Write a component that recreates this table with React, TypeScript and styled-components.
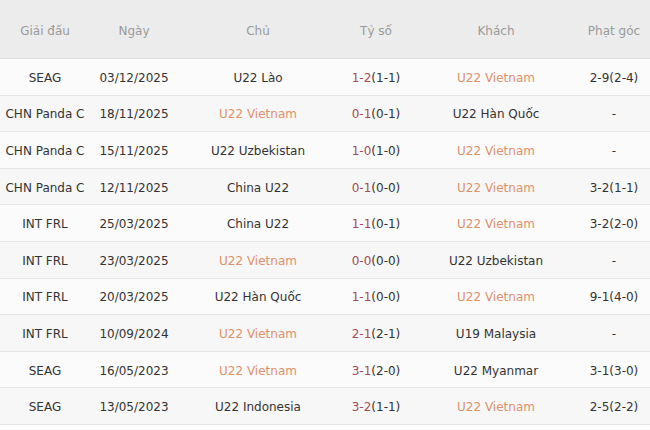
import React from "react";
import styled, { createGlobalStyle } from "styled-components";

const GlobalStyle = createGlobalStyle`
  body {
    margin: 0;
    background: #fff;
    font-family: "DejaVu Sans", Verdana, sans-serif;
  }
`;

const COLS = "90px 88px 160px 76px 164px 72px";

const Table = styled.div`
  width: 650px;
  display: flex;
  flex-direction: column;
`;

const HeaderRow = styled.div`
  display: grid;
  grid-template-columns: ${COLS};
  height: 59px;
  align-items: center;
  background: #ececec;
  border-bottom: 1px solid #dedede;
  box-sizing: border-box;
`;

const HeaderCell = styled.div`
  text-align: center;
  font-size: 12px;
  color: #9a9a9a;
  padding-top: 3px;
`;

const Row = styled.div<{ $alt: boolean }>`
  display: grid;
  grid-template-columns: ${COLS};
  height: 36.6px;
  align-items: center;
  background: ${(p) => (p.$alt ? "#f7f7f7" : "#fbfbfb")};
  border-bottom: 1px solid #e4e4e4;
  box-sizing: border-box;
`;

const Cell = styled.div<{ $home?: boolean }>`
  text-align: center;
  font-size: 12px;
  color: ${(p) => (p.$home ? "#e0906a" : "#333")};
  white-space: nowrap;
  padding-top: 2px;
`;

const FullTime = styled.span`
  color: #a8495a;
`;

type Match = {
  league: string;
  date: string;
  home: string;
  ft: string;
  ht: string;
  away: string;
  corners: string;
};

const TEAM = "U22 Vietnam";

const matches: Match[] = [
  { league: "SEAG", date: "03/12/2025", home: "U22 Lào", ft: "1-2", ht: "(1-1)", away: TEAM, corners: "2-9(2-4)" },
  { league: "CHN Panda C", date: "18/11/2025", home: TEAM, ft: "0-1", ht: "(0-1)", away: "U22 Hàn Quốc", corners: "-" },
  { league: "CHN Panda C", date: "15/11/2025", home: "U22 Uzbekistan", ft: "1-0", ht: "(1-0)", away: TEAM, corners: "-" },
  { league: "CHN Panda C", date: "12/11/2025", home: "China U22", ft: "0-1", ht: "(0-0)", away: TEAM, corners: "3-2(1-1)" },
  { league: "INT FRL", date: "25/03/2025", home: "China U22", ft: "1-1", ht: "(0-1)", away: TEAM, corners: "3-2(2-0)" },
  { league: "INT FRL", date: "23/03/2025", home: TEAM, ft: "0-0", ht: "(0-0)", away: "U22 Uzbekistan", corners: "-" },
  { league: "INT FRL", date: "20/03/2025", home: "U22 Hàn Quốc", ft: "1-1", ht: "(0-0)", away: TEAM, corners: "9-1(4-0)" },
  { league: "INT FRL", date: "10/09/2024", home: TEAM, ft: "2-1", ht: "(2-1)", away: "U19 Malaysia", corners: "-" },
  { league: "SEAG", date: "16/05/2023", home: TEAM, ft: "3-1", ht: "(2-0)", away: "U22 Myanmar", corners: "3-1(3-0)" },
  { league: "SEAG", date: "13/05/2023", home: "U22 Indonesia", ft: "3-2", ht: "(1-1)", away: TEAM, corners: "2-5(2-2)" },
];

const headers = ["Giải đấu", "Ngày", "Chủ", "Tỷ số", "Khách", "Phạt góc"];

export default function App() {
  return (
    <>
      <GlobalStyle />
      <Table>
        <HeaderRow>
          {headers.map((h) => (
            <HeaderCell key={h}>{h}</HeaderCell>
          ))}
        </HeaderRow>
        {matches.map((m, i) => (
          <Row key={i} $alt={i % 2 === 1}>
            <Cell>{m.league}</Cell>
            <Cell>{m.date}</Cell>
            <Cell $home={m.home === TEAM}>{m.home}</Cell>
            <Cell>
              <FullTime>{m.ft}</FullTime>
              {m.ht}
            </Cell>
            <Cell $home={m.away === TEAM}>{m.away}</Cell>
            <Cell>{m.corners}</Cell>
          </Row>
        ))}
      </Table>
    </>
  );
}
